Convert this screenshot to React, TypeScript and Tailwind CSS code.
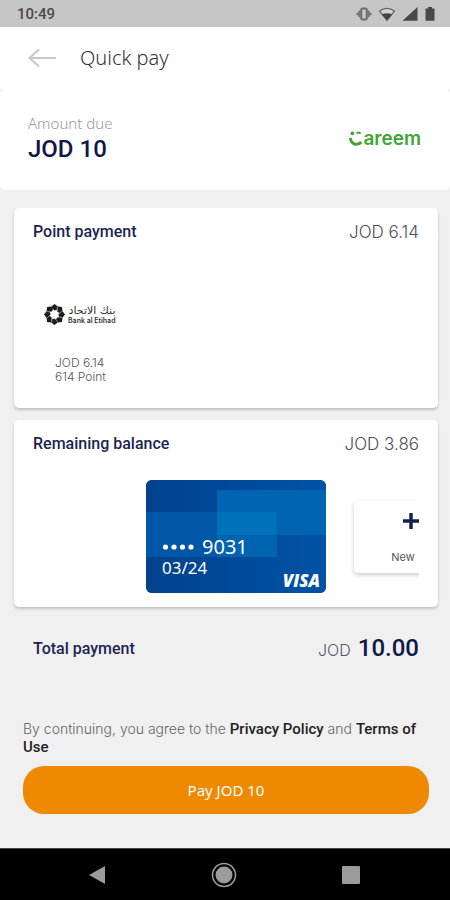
import type { ReactNode } from "react";

/* ---------------- STATUS BAR ---------------- */
function StatusBar() {
  return (
    <div className="flex h-[27px] items-center justify-between bg-[#c6c6c6] pl-[17px] pr-[14px] text-[#4a4a4a]">
      <span className="font-['Roboto',sans-serif] text-[15px] font-medium leading-5">10:49</span>
      <div className="flex items-center gap-[6px]">
        <svg className="h-4 w-4" viewBox="0 0 16 16" fill="none" aria-hidden="true">
          <rect x="5.200" y="2.500" width="5.600" height="11" rx="1.500" fill="#c6c6c6" stroke="#6a6a6a" strokeWidth="2" />
          <path d="M4 4L0 8l4 4zM12 4L16 8l-4 4z" fill="#777" />
        </svg>
        <svg className="h-4 w-[18px]" viewBox="0 0 18 16" aria-hidden="true">
          <path d="M1.500 5.200C6 1.400 12 1.400 16.500 5.200L9 14.200z" fill="#d4d4d4" stroke="#666" strokeWidth="1.300" />
          <path d="M3.800 8.200C7 6.800 11 6.800 14.200 8.200L9 14.500z" fill="#444" />
        </svg>
        <svg className="h-4 w-4" viewBox="0 0 16 16" aria-hidden="true">
          <path d="M.500 14.700L15.500 1v13.700z" fill="#484848" />
        </svg>
        <svg className="h-4 w-3" viewBox="0 0 12 16" aria-hidden="true">
          <path d="M4 1h4v1.500h2.500v12.200h-9V2.500H4z" fill="#484848" />
        </svg>
      </div>
    </div>
  );
}

/* ---------------- LOGOS ---------------- */
function CareemLogo() {
  return (
    <div className="flex items-center text-[#3fa535]">
      <svg className="h-5 w-[14px]" viewBox="0 0 14 20" fill="none" aria-hidden="true">
        <circle cx="3.300" cy="4.300" r="1.900" fill="currentColor" />
        <path d="M7.700 4.600Q9.700 2.200 11.700 4.600" stroke="currentColor" strokeWidth="2" />
        <path d="M1.300 8.800C2 16 9 16.800 12.300 13" stroke="currentColor" strokeWidth="2.900" />
      </svg>
      <span className="font-['Inter',sans-serif] text-[19px] font-semibold leading-5">areem</span>
    </div>
  );
}

const petals = [0, 45, 90, 135, 180, 225, 270, 315];

function BankLogo() {
  return (
    <div className="flex items-center gap-[3px]">
      <svg className="h-[21px] w-[21px]" viewBox="0 0 20 20" fill="#1c1c1c" aria-hidden="true">
        {petals.map((angle) => (
          <g key={angle} transform={`rotate(${angle} 10 10)`}>
            <path d="M10 0L13.100 2.400 12.600 5.300 10.300 6.300 7.600 5 7 2.300z" />
            <path d="M7 3.200L9.800 6.200" stroke="#bbb" strokeWidth=".7" />
          </g>
        ))}
      </svg>
      <div className="flex flex-col text-[#333]">
        <span className="font-['DejaVu_Sans',sans-serif] text-[11px] leading-[11px]" lang="ar" dir="rtl">
          بنك الاتحاد
        </span>
        <span className="font-['Inter',sans-serif] text-[7px] font-semibold leading-[9px]">
          Bank al Etihad
        </span>
      </div>
    </div>
  );
}

/* ---------------- PANEL ---------------- */
function Panel({ title, amount, children }: { title: string; amount: string; children: ReactNode }) {
  return (
    <section className="rounded-[5px] bg-white px-[19px] shadow-[0_2px_3px_rgba(0,0,0,0.2)]">
      <div className="flex items-center justify-between pt-3">
        <h2 className="font-['Roboto',sans-serif] text-[16px] font-medium leading-6 text-[#1c2550]">
          {title}
        </h2>
        <span className="font-['Inter',sans-serif] text-[17px] font-light leading-6 text-[#4c4f5c]">{amount}</span>
      </div>
      {children}
    </section>
  );
}

function PaymentCard() {
  return (
    <div className="relative h-[113px] w-[180px] shrink-0 overflow-hidden rounded-[6px] bg-[#004b9c] text-white">
      <svg className="absolute inset-0 h-full w-full" viewBox="0 0 180 113" preserveAspectRatio="none" aria-hidden="true">
        <defs>
          <linearGradient id="cardBlue" x1="0" y1="0" x2="1" y2="0">
            <stop offset="0" stopColor="#00428c" />
            <stop offset="1" stopColor="#0052a6" />
          </linearGradient>
        </defs>
        <rect width="180" height="113" fill="url(#cardBlue)" />
        <rect y="32" width="131" height="45" fill="#0057a8" />
        <rect x="71" y="10" width="109" height="45" fill="#0064b2" />
        <rect x="71" y="32" width="60" height="23" fill="#0072bb" />
        <rect x="71" y="55" width="60" height="22" fill="#0064b0" />
      </svg>
      <div className="relative flex flex-col pl-4 pt-[55px]">
        <div className="flex items-center gap-2">
          <svg className="h-2 w-8" viewBox="0 0 32 8" fill="white" aria-hidden="true">
            <circle cx="3.500" cy="4" r="2.600" />
            <circle cx="12" cy="4" r="2.600" />
            <circle cx="20.500" cy="4" r="2.600" />
            <circle cx="29" cy="4" r="2.600" />
          </svg>
          <span className="text-[20px] leading-6">9031</span>
        </div>
        <span className="text-[17px] leading-[18px]">03/24</span>
      </div>
      <span className="absolute bottom-1 right-[6px] font-['Open_Sans',sans-serif] text-[17px] font-extrabold italic leading-4">
        VISA
      </span>
    </div>
  );
}

/* ---------------- PAGE ---------------- */
export default function App() {
  return (
    <main className="flex min-h-screen flex-col bg-[#f0f0f0] font-['Noto_Sans',sans-serif]">
      <StatusBar />

      <header className="flex h-[62px] items-center gap-6 bg-white pl-7">
        <button type="button" aria-label="Back">
          <svg className="h-5 w-7" viewBox="0 0 28 20" fill="none" stroke="#c8c8c8" strokeWidth="2" aria-hidden="true">
            <path d="M28 10H1.500M11 1.500L1.500 10l9.500 8.500" />
          </svg>
        </button>
        <h1 className="text-[20px] font-light leading-7 text-[#333]">Quick pay</h1>
      </header>

      <section className="flex items-center justify-between rounded-[5px] bg-white pb-[25px] pl-7 pr-[29px] pt-6">
        <div>
          <p className="text-[15px] font-light leading-5 text-[#999]">Amount due</p>
          <p className="font-['Roboto',sans-serif] text-[24px] font-medium leading-8 text-[#101848]">JOD 10</p>
        </div>
        <CareemLogo />
      </section>

      <div className="flex flex-col gap-3 pl-[14px] pr-3 pt-[18px]">
        <Panel title="Point payment" amount="JOD 6.14">
          <div className="flex flex-col gap-[31px] pb-6 pl-[11px] pt-[60px]">
            <BankLogo />
            <p className="flex flex-col pl-[11px] font-['Inter',sans-serif] text-[12px] font-light leading-[14px] text-[#555]">
              <span>JOD 6.14</span>
              <span>614 Point</span>
            </p>
          </div>
        </Panel>

        <Panel title="Remaining balance" amount="JOD 3.86">
          <div className="flex items-center gap-7 overflow-hidden pb-[14px] pl-[113px] pt-6">
            <PaymentCard />
            <button
              type="button"
              className="flex h-[72px] w-[114px] shrink-0 flex-col items-center justify-between rounded-[4px] bg-white pb-2 pt-3 text-[#14204f] shadow-[0_2px_4px_rgba(0,0,0,0.2)]"
            >
              <svg className="h-4 w-4" viewBox="0 0 16 16" stroke="currentColor" strokeWidth="3.500" aria-hidden="true">
                <path d="M8 0v16M0 8h16" />
              </svg>
              <span className="pr-4 font-['Inter',sans-serif] text-[11px] leading-4 text-[#555]">New</span>
            </button>
          </div>
        </Panel>
      </div>

      <div className="flex items-center justify-between pl-[33px] pr-[31px] pt-[25px]">
        <span className="font-['Roboto',sans-serif] text-[16px] font-medium leading-8 text-[#1c2550]">
          Total payment
        </span>
        <div className="flex items-baseline gap-[7px]">
          <span className="font-['Inter',sans-serif] text-[16px] font-light leading-8 text-[#555a70]">JOD</span>
          <span className="font-['Roboto',sans-serif] text-[24px] font-medium leading-8 text-[#101848]">10.00</span>
        </div>
      </div>

      <div className="mt-auto flex flex-col gap-[10px] pb-[34px] pl-[23px] pr-[21px]">
        <p className="font-['Inter',sans-serif] text-[14px] font-light leading-[18px] text-[#666]">
          By continuing, you agree to the{" "}
          <a href="#privacy" className="font-['Roboto',sans-serif] text-[15px] font-medium text-[#222]">
            Privacy Policy
          </a>{" "}
          and{" "}
          <a href="#terms" className="font-['Roboto',sans-serif] text-[15px] font-medium text-[#222]">
            Terms of Use
          </a>
        </p>
        <button type="button" className="h-12 rounded-[21px] bg-[#ee8901] text-[15px] leading-5 text-white">
          Pay JOD 10
        </button>
      </div>

      <nav className="flex h-[52px] items-center justify-around border-t border-[#444] bg-black pl-9 pr-[38px]">
        <button type="button" aria-label="System back">
          <svg className="h-[18px] w-[18px]" viewBox="0 0 18 18" fill="#9b9b9b" aria-hidden="true">
            <path d="M17 0v18L1 9z" />
          </svg>
        </button>
        <button type="button" aria-label="Home">
          <svg className="h-[26px] w-[26px]" viewBox="0 0 26 26" aria-hidden="true">
            <circle cx="13" cy="13" r="11.500" fill="none" stroke="#9b9b9b" strokeWidth="1.500" />
            <circle cx="13" cy="13" r="8.500" fill="#9b9b9b" />
          </svg>
        </button>
        <button type="button" aria-label="Recent apps">
          <svg className="h-[18px] w-[18px]" viewBox="0 0 18 18" aria-hidden="true">
            <rect width="18" height="18" rx="1" fill="#9b9b9b" />
          </svg>
        </button>
      </nav>
    </main>
  );
}
